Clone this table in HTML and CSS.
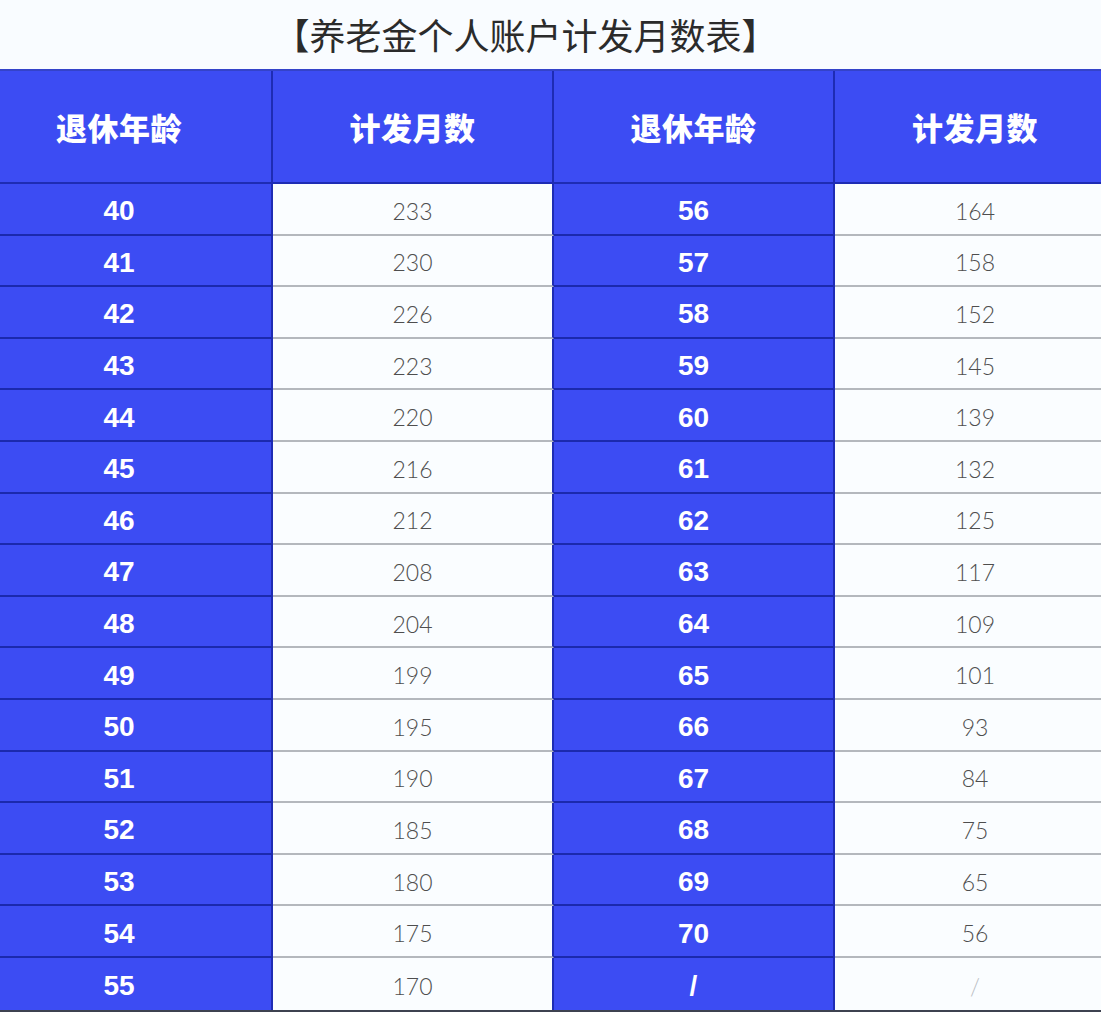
FILE: index.html
```html
<!DOCTYPE html>
<html lang="zh-CN">
<head>
<meta charset="utf-8">
<title>养老金个人账户计发月数表</title>
<link rel="stylesheet" href="styles.css">
</head>
<body>
<div class="page">
  <div class="title">【养老金个人账户计发月数表】</div>
  <div class="table">
    <div class="cell head c1">退休年龄</div>
    <div class="cell head c2">计发月数</div>
    <div class="cell head c3">退休年龄</div>
    <div class="cell head c4">计发月数</div>

    <div class="cell age c1">40</div><div class="cell val c2">233</div><div class="cell age c3">56</div><div class="cell val c4">164</div>
    <div class="cell age c1">41</div><div class="cell val c2">230</div><div class="cell age c3">57</div><div class="cell val c4">158</div>
    <div class="cell age c1">42</div><div class="cell val c2">226</div><div class="cell age c3">58</div><div class="cell val c4">152</div>
    <div class="cell age c1">43</div><div class="cell val c2">223</div><div class="cell age c3">59</div><div class="cell val c4">145</div>
    <div class="cell age c1">44</div><div class="cell val c2">220</div><div class="cell age c3">60</div><div class="cell val c4">139</div>
    <div class="cell age c1">45</div><div class="cell val c2">216</div><div class="cell age c3">61</div><div class="cell val c4">132</div>
    <div class="cell age c1">46</div><div class="cell val c2">212</div><div class="cell age c3">62</div><div class="cell val c4">125</div>
    <div class="cell age c1">47</div><div class="cell val c2">208</div><div class="cell age c3">63</div><div class="cell val c4">117</div>
    <div class="cell age c1">48</div><div class="cell val c2">204</div><div class="cell age c3">64</div><div class="cell val c4">109</div>
    <div class="cell age c1">49</div><div class="cell val c2">199</div><div class="cell age c3">65</div><div class="cell val c4">101</div>
    <div class="cell age c1">50</div><div class="cell val c2">195</div><div class="cell age c3">66</div><div class="cell val c4">93</div>
    <div class="cell age c1">51</div><div class="cell val c2">190</div><div class="cell age c3">67</div><div class="cell val c4">84</div>
    <div class="cell age c1">52</div><div class="cell val c2">185</div><div class="cell age c3">68</div><div class="cell val c4">75</div>
    <div class="cell age c1">53</div><div class="cell val c2">180</div><div class="cell age c3">69</div><div class="cell val c4">65</div>
    <div class="cell age c1">54</div><div class="cell val c2">175</div><div class="cell age c3">70</div><div class="cell val c4">56</div>
    <div class="cell age c1 last">55</div><div class="cell val c2 last">170</div><div class="cell age c3 last">/</div><div class="cell val c4 last faint">/</div>
  </div>
  <div class="bottom-strip"></div>
</div>
</body>
</html>
```

FILE: styles.css
```css
html, body {
  margin: 0;
  padding: 0;
  background: #f9fcff;
}

.page {
  width: 1101px;
  height: 1012px;
  overflow: hidden;
  display: flex;
  flex-direction: column;
}

.title {
  height: 69px;
  flex: none;
  display: flex;
  align-items: center;
  justify-content: center;
  padding-right: 50px;
  padding-bottom: 2px;
  box-sizing: border-box;
  font-family: "Noto Sans CJK SC", "Noto Sans", sans-serif;
  font-size: 36px;
  font-weight: 400;
  color: #2b2b2b;
}

.table {
  flex: none;
  display: grid;
  grid-template-columns: 273px 281px 281px 266px;
  grid-template-rows: 113px repeat(16, 51.6px);
  border-top: 2px solid #3443c9;
}

.cell {
  display: flex;
  align-items: center;
  justify-content: center;
  box-sizing: border-box;
}

.head {
  background: #3c4cf3;
  color: #ffffff;
  font-family: "Noto Sans CJK SC", sans-serif;
  font-size: 31px;
  font-weight: 900;
  letter-spacing: 0.5px;
  border-bottom: 2px solid #1e2cb4;
  border-right: 2px solid #1e2cb4;
}

.age {
  background: #3c4cf3;
  color: #ffffff;
  font-family: "Liberation Sans", Arial, sans-serif;
  font-size: 28px;
  font-weight: 700;
  padding-top: 5px;
  border-bottom: 2px solid #1b29ad;
  border-right: 2px solid #1e2cb4;
}

.val {
  background: #fafdff;
  color: #4e4e4e;
  font-family: Lato, "DejaVu Sans", sans-serif;
  font-size: 23px;
  font-weight: 300;
  padding-top: 4px;
  border-bottom: 2px solid #b4b8bd;
}

.val.c2 {
  border-right: 2px solid #1e2cb4;
}

.c1 {
  padding-right: 33px;
}

.c4 {
  padding-left: 14px;
  border-right: none;
}

.last {
  border-bottom: none;
}

.faint {
  color: #b8bcc2;
}

.bottom-strip {
  flex: 1;
  background: #3d4250;
}
```
